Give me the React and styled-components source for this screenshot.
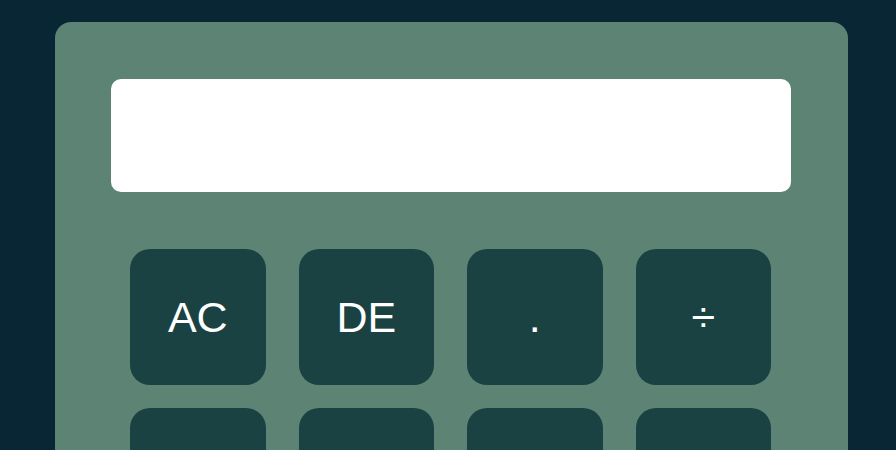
import styled, { createGlobalStyle } from 'styled-components'

const GlobalStyle = createGlobalStyle`
    html, body {
        margin: 0;
        padding: 0;
        background-color: #092635;
        overflow: hidden;
        font-family: "Liberation Sans", Arial, sans-serif;
    }
`

const keys = [
    'AC', 'DE', '.', '÷',
    '7', '8', '9', '×',
    '4', '5', '6', '-',
    '1', '2', '3', '+',
    '00', '0', '=',
]

const App = () => {
    return (
        <Page>
            <GlobalStyle/>
            <Calculator>
                <Display type="text" readOnly value=""/>
                <Keys>
                    {keys.map((k) => (
                        <Key key={k} $wide={k === '='}>{k}</Key>
                    ))}
                </Keys>
            </Calculator>
        </Page>
    )
}

const Page = styled.div`
    min-height: 100vh;
    padding: 22px 0 0 55px;
    box-sizing: border-box;
`

const Calculator = styled.div`
    width: 793px;
    box-sizing: border-box;
    padding: 57px 57px 57px 56px;
    background-color: #5c8374;
    border-radius: 16px;
`

const Display = styled.input`
    display: block;
    width: 680px;
    height: 113px;
    box-sizing: border-box;
    border: none;
    outline: none;
    border-radius: 10px;
    background-color: #fff;
    padding: 0 20px;
    font-size: 48px;
    text-align: right;
    color: #1b4242;
`

const Keys = styled.div`
    margin: 57px 20px 0 19px;
    display: grid;
    grid-template-columns: repeat(4, 135.5px);
    grid-auto-rows: 136px;
    justify-content: space-between;
    row-gap: 23px;
`

const Key = styled.button`
    border: none;
    border-radius: 20px;
    background-color: #1b4242;
    color: #fff;
    font-family: "Liberation Sans", Arial, sans-serif;
    font-size: 43px;
    padding: 0;
    cursor: pointer;
    grid-column: ${(props) => (props.$wide ? 'span 2' : 'auto')};
`

export default App
